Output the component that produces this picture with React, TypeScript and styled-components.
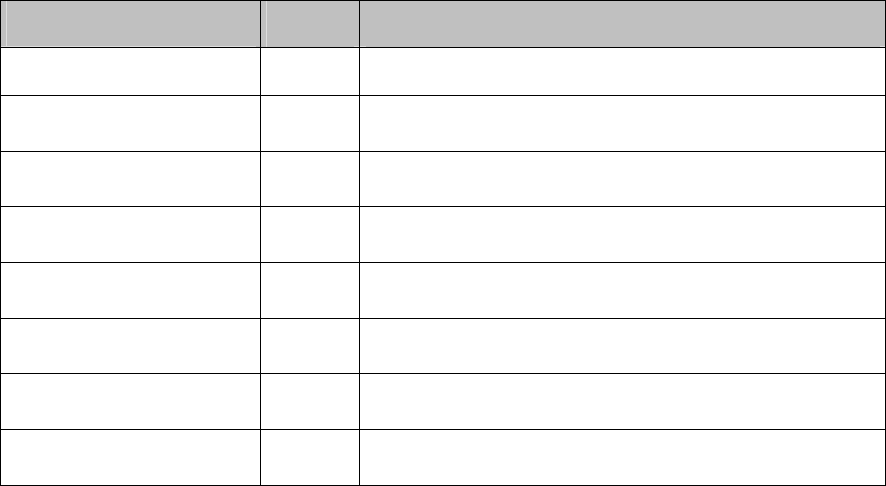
import React from "react";
import styled, { createGlobalStyle } from "styled-components";

const columns = ["", "", ""];
const rowHeights = [47, 55, 54, 55, 55, 54, 55, 55];

const GlobalStyle = createGlobalStyle`
  html, body {
    margin: 0;
    padding: 0;
    background: #ffffff;
    font-family: "Liberation Sans", Arial, sans-serif;
  }
`;

const App: React.FC = () => {
  const template = `46px ${rowHeights.map((h) => `${h}px`).join(" ")}`;

  return (
    <>
      <GlobalStyle />
      <Table style={{ gridTemplateRows: template }}>
        <HeaderCell $edge="first">{columns[0]}</HeaderCell>
        <HeaderCell $edge="middle">{columns[1]}</HeaderCell>
        <HeaderCell $edge="last">{columns[2]}</HeaderCell>
        {rowHeights.map((_, r) =>
          columns.map((_, c) => <Cell key={`${r}-${c}`} />)
        )}
      </Table>
    </>
  );
};

const Table = styled.div`
  width: 886px;
  height: 486px;
  box-sizing: border-box;
  display: grid;
  grid-template-columns: 259px 98px 525px;
  gap: 1px;
  padding: 1px;
  background: #000000;
`;

const light = "#dedede";

const HeaderCell = styled.div<{ $edge: "first" | "middle" | "last" }>`
  background-color: #c0c0c0;
  font-size: 13px;
  font-weight: bold;
  background-image: ${({ $edge }) =>
    $edge === "first"
      ? `linear-gradient(to right, transparent 5px, ${light} 5px, ${light} 6px, transparent 6px),
         linear-gradient(to top, ${light} 1px, transparent 1px)`
      : $edge === "middle"
      ? `linear-gradient(to right, transparent 5px, ${light} 5px, ${light} 6px, transparent 6px),
         linear-gradient(to right, transparent 93px, ${light} 93px)`
      : `linear-gradient(to right, ${light} 6px, transparent 6px, transparent 520px, ${light} 520px)`};
  background-repeat: no-repeat;
  background-size: ${({ $edge }) =>
    $edge === "first"
      ? "100% 100%, calc(100% - 4px) 100%"
      : $edge === "middle"
      ? "100% 100%, 100% 1px"
      : "100% 1px"};
  background-position: ${({ $edge }) =>
    $edge === "first"
      ? "0 0, 0 0"
      : $edge === "middle"
      ? "0 0, 0 100%"
      : "0 100%"};
`;

const Cell = styled.div`
  background: #ffffff;
`;

export default App;
